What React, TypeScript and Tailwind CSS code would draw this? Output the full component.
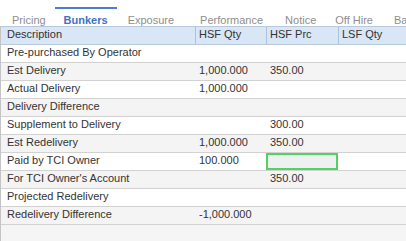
import React from 'react';

type Row = {
  label: string;
  hsfQty?: string;
  hsfPrc?: string;
  lsfQty?: string;
  editing?: boolean;
};

const tabs = [
  { name: 'Pricing', cls: 'ml-[12px]' },
  { name: 'Bunkers', cls: 'ml-[9px] w-[62px]', active: true },
  { name: 'Exposure', cls: 'ml-[11px]' },
  { name: 'Performance', cls: 'ml-[26px]' },
  { name: 'Notice', cls: 'ml-[22px]' },
  { name: 'Off Hire', cls: 'ml-[19px]' },
  { name: 'Bal', cls: 'ml-[21px]' },
];

const rows: Row[] = [
  { label: 'Pre-purchased By Operator' },
  { label: 'Est Delivery', hsfQty: '1,000.000', hsfPrc: '350.00' },
  { label: 'Actual Delivery', hsfQty: '1,000.000' },
  { label: 'Delivery Difference' },
  { label: 'Supplement to Delivery', hsfPrc: '300.00' },
  { label: 'Est Redelivery', hsfQty: '1,000.000', hsfPrc: '350.00' },
  { label: 'Paid by TCI Owner', hsfQty: '100.000', editing: true },
  { label: "For TCI Owner's Account", hsfPrc: '350.00' },
  { label: 'Projected Redelivery' },
  { label: 'Redelivery Difference', hsfQty: '-1,000.000' },
];

export default function App() {
  return (
    <div className="w-[406px] h-[241px] overflow-hidden bg-white font-['Liberation_Sans',Arial,sans-serif] text-[11px] text-[#333]">
      {/* tab strip */}
      <div className="flex h-[26px] whitespace-nowrap">
        {tabs.map((t) => (
          <div key={t.name} className={`flex flex-col items-center shrink-0 pt-[7px] ${t.cls}`}>
            <div className={`h-[2px] w-full ${t.active ? 'bg-[#4a7fd0]' : 'bg-transparent'}`} />
            <div
              className={`mt-[5px] leading-[12px] ${
                t.active ? 'font-bold text-[#3f72c2]' : 'text-[#8e8e8e]'
              }`}
            >
              {t.name}
            </div>
          </div>
        ))}
      </div>

      {/* grid */}
      <div className="border-l border-[#c4c4c4] bg-[#f5f5f5] h-[215px]">
        <div className="grid grid-cols-[194px_71px_72px_1fr] h-[19px] border-y border-[#b9c9dd] bg-[#d9e6f6] leading-[15px]">
          <div className="pl-[6px]">Description</div>
          <div className="pl-[3px] border-l border-[#a9c2e2]">HSF Qty</div>
          <div className="pl-[3px] border-l border-[#a9c2e2]">HSF Prc</div>
          <div className="pl-[3px] border-l border-[#a9c2e2]">LSF Qty</div>
        </div>
        {rows.map((r, i) => (
          <div
            key={r.label}
            className={`grid grid-cols-[194px_71px_72px_1fr] h-[18px] border-b border-[#d2d2d2] leading-[15px] ${
              i % 2 === 0 ? 'bg-white' : 'bg-[#f4f4f4]'
            }`}
          >
            <div className="pl-[6px] whitespace-nowrap">{r.label}</div>
            <div className="pl-[4px]">{r.hsfQty}</div>
            {r.editing ? (
              <div className="border-2 border-[#55d163] bg-[#eff0f2]" />
            ) : (
              <div className="pl-[4px]">{r.hsfPrc}</div>
            )}
            <div className="pl-[4px]">{r.lsfQty}</div>
          </div>
        ))}
      </div>
    </div>
  );
}
